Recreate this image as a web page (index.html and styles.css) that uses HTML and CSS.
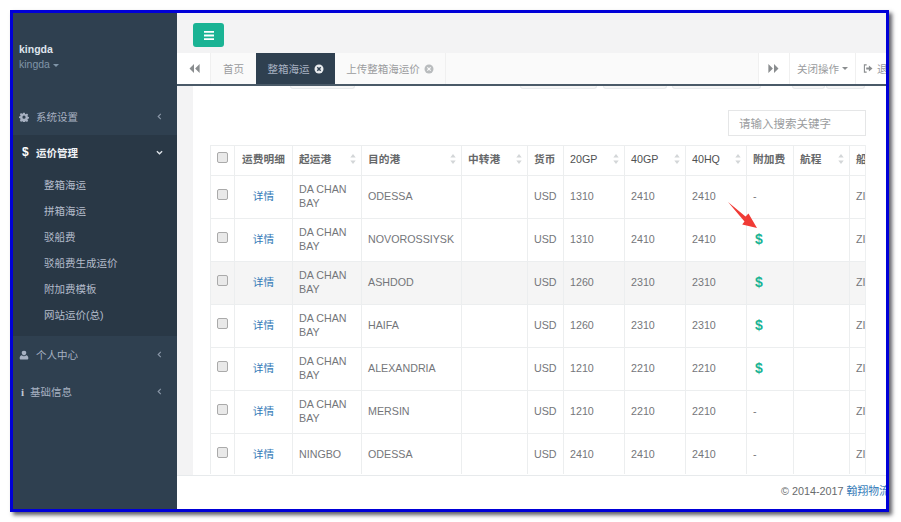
FILE: index.html
```html
<!DOCTYPE html>
<html lang="zh">
<head>
<meta charset="utf-8">
<title>整箱海运</title>
<link rel="stylesheet" href="styles.css">
</head>
<body>
<div class="frame">
  <aside class="sidebar">
    <div class="profile">
      <div class="profile-name">kingda</div>
      <div class="profile-role">kingda <span class="caret"></span></div>
    </div>
    <nav>
      <a class="nav-item">
        <svg class="nav-icon" viewBox="0 0 12 12"><path fill="#a7b1c2" fill-rule="evenodd" d="M5 .8h2l.3 1.5 1 .4 1.3-.8 1.4 1.4-.8 1.3.4 1 1.500.3v2l-1.500.3-.4 1 .8 1.300-1.400 1.400-1.300-.8-1 .4-.3 1.500H5l-.3-1.500-1-.4-1.300.8L1 9.900l.8-1.300-.4-1L-.1 7.300v-2l1.500-.3.4-1L1 2.700 2.400 1.300l1.300.8 1-.4zM6 4.300a1.900 1.900 0 1 0 0 3.800 1.900 1.900 0 0 0 0-3.800z"/></svg>
        <span class="nav-label">系统设置</span>
        <svg class="nav-arrow" viewBox="0 0 6 8"><path d="M4.500 1 1.500 4l3 3" fill="none" stroke="#8a97a8" stroke-width="1.300"/></svg>
      </a>
      <div class="nav-active">
        <a class="nav-item nav-head">
          <span class="nav-dollar">$</span>
          <span class="nav-label">运价管理</span>
          <svg class="nav-arrow" viewBox="0 0 8 6"><path d="M1 1.500 4 4.500l3-3" fill="none" stroke="#dfe4ea" stroke-width="1.500"/></svg>
        </a>
        <ul class="subnav">
          <li>整箱海运</li>
          <li>拼箱海运</li>
          <li>驳船费</li>
          <li>驳船费生成运价</li>
          <li>附加费模板</li>
          <li>网站运价(总)</li>
        </ul>
      </div>
      <a class="nav-item">
        <svg class="nav-icon" viewBox="0 0 12 12"><path fill="#a7b1c2" d="M6 .8a2.700 2.700 0 0 1 2.700 2.900c0 1.300-.9 2.800-2.700 2.800S3.300 5 3.300 3.700A2.700 2.700 0 0 1 6 .8zM3.400 6.200C4.100 7 5 7.400 6 7.400s1.900-.4 2.600-1.200c1.700.2 2.600 1.600 2.600 3.600 0 1-.6 1.500-1.500 1.500H2.300c-.9 0-1.500-.5-1.500-1.500 0-2 .9-3.400 2.600-3.600z"/></svg>
        <span class="nav-label nav-label-tight">个人中心</span>
        <svg class="nav-arrow" viewBox="0 0 6 8"><path d="M4.500 1 1.500 4l3 3" fill="none" stroke="#8a97a8" stroke-width="1.300"/></svg>
      </a>
      <a class="nav-item">
        <span class="nav-info">i</span>
        <span class="nav-label">基础信息</span>
        <svg class="nav-arrow" viewBox="0 0 6 8"><path d="M4.500 1 1.500 4l3 3" fill="none" stroke="#8a97a8" stroke-width="1.300"/></svg>
      </a>
    </nav>
  </aside>

  <section class="content">
    <header class="topbar">
      <button class="menu-btn" type="button" aria-label="菜单">
        <svg viewBox="0 0 10 9" width="10" height="9"><path fill="#fff" d="M0 0h10v1.800H0zM0 3.600h10v1.800H0zM0 7.200h10V9H0z"/></svg>
      </button>
    </header>

    <div class="tabbar">
      <div class="tab-ctrl tab-ctrl-left">
        <svg viewBox="0 0 10 8" width="12" height="9"><path fill="#8a8d8f" d="M5 0v8L1 4zM10 0v8L6 4z"/></svg>
      </div>
      <div class="tab">首页</div>
      <div class="tab tab-on">整箱海运
        <svg class="tab-close" viewBox="0 0 10 10"><circle cx="5" cy="5" r="4.500" fill="#e8ebee"/><path d="M3.300 3.300l3.400 3.400M6.700 3.300 3.300 6.700" stroke="#2f4050" stroke-width="1.400"/></svg>
      </div>
      <div class="tab tab-wide">上传整箱海运价
        <svg class="tab-close" viewBox="0 0 10 10"><circle cx="5" cy="5" r="4.500" fill="#b9bcbe"/><path d="M3.300 3.300l3.400 3.400M6.700 3.300 3.300 6.700" stroke="#fafafa" stroke-width="1.200"/></svg>
      </div>
      <div class="tab-fill"></div>
      <div class="tab-ctrl tab-ctrl-right">
        <svg viewBox="0 0 10 8" width="12" height="9"><path fill="#8a8d8f" d="M0 0v8l4-4zM5 0v8l4-4z"/></svg>
      </div>
      <div class="tab-ctrl tab-close-all">关闭操作 <span class="caret caret-dark"></span></div>
      <div class="tab-ctrl tab-exit">
        <svg class="exit-icon" viewBox="0 0 11 10" width="10" height="9"><path fill="none" stroke="#8a8d8f" stroke-width="1.200" d="M4 1H1.500v8H4"/><path fill="#8a8d8f" d="M3.500 3.800h3V1.800L10.500 5l-4 3.200v-2h-3z"/></svg>
        <span>退出</span>
      </div>
    </div>

    <main class="main">
      <div class="panel">
        <div class="peek">
          <span class="peek-a"></span><span class="peek-b"></span><span class="peek-c"></span><span class="peek-d"></span><span class="peek-e"></span><span class="peek-f"></span>
        </div>
        <div class="search-row">
          <input class="search" type="text" placeholder="请输入搜索关键字">
        </div>
        <div class="table-wrap">
          <table class="grid">
            <colgroup>
              <col class="c1"><col class="c2"><col class="c3"><col class="c4"><col class="c5"><col class="c6"><col class="c7"><col class="c8"><col class="c9"><col class="c10"><col class="c11"><col class="c12">
            </colgroup>
            <thead>
              <tr>
                <th><span class="check check-head"></span></th>
                <th class="th-center">运费明细</th>
                <th><div class="th-sort">起运港<svg class="sort" viewBox="0 0 6 10"><path fill="#d3d6d8" d="M3 0l2.700 3.600H.3zM3 10 .3 6.400h5.400z"/></svg></div></th>
                <th><div class="th-sort">目的港<svg class="sort" viewBox="0 0 6 10"><path fill="#d3d6d8" d="M3 0l2.700 3.600H.3zM3 10 .3 6.400h5.400z"/></svg></div></th>
                <th><div class="th-sort">中转港<svg class="sort" viewBox="0 0 6 10"><path fill="#d3d6d8" d="M3 0l2.700 3.600H.3zM3 10 .3 6.400h5.400z"/></svg></div></th>
                <th>货币</th>
                <th class="th-latin"><div class="th-sort">20GP<svg class="sort" viewBox="0 0 6 10"><path fill="#d3d6d8" d="M3 0l2.700 3.600H.3zM3 10 .3 6.400h5.400z"/></svg></div></th>
                <th class="th-latin"><div class="th-sort">40GP<svg class="sort" viewBox="0 0 6 10"><path fill="#d3d6d8" d="M3 0l2.700 3.600H.3zM3 10 .3 6.400h5.400z"/></svg></div></th>
                <th class="th-latin"><div class="th-sort">40HQ<svg class="sort" viewBox="0 0 6 10"><path fill="#d3d6d8" d="M3 0l2.700 3.600H.3zM3 10 .3 6.400h5.400z"/></svg></div></th>
                <th>附加费</th>
                <th><div class="th-sort">航程<svg class="sort" viewBox="0 0 6 10"><path fill="#d3d6d8" d="M3 0l2.700 3.600H.3zM3 10 .3 6.400h5.400z"/></svg></div></th>
                <th>船公司</th>
              </tr>
            </thead>
            <tbody>
              <tr><td><span class="check"></span></td><td class="link">详情</td><td>DA CHAN BAY</td><td>ODESSA</td><td></td><td>USD</td><td>1310</td><td>2410</td><td>2410</td><td>-</td><td></td><td>ZIM</td></tr>
              <tr><td><span class="check"></span></td><td class="link">详情</td><td>DA CHAN BAY</td><td>NOVOROSSIYSK</td><td></td><td>USD</td><td>1310</td><td>2410</td><td>2410</td><td><span class="fee">$</span></td><td></td><td>ZIM</td></tr>
              <tr class="stripe"><td><span class="check"></span></td><td class="link">详情</td><td>DA CHAN BAY</td><td>ASHDOD</td><td></td><td>USD</td><td>1260</td><td>2310</td><td>2310</td><td><span class="fee">$</span></td><td></td><td>ZIM</td></tr>
              <tr><td><span class="check"></span></td><td class="link">详情</td><td>DA CHAN BAY</td><td>HAIFA</td><td></td><td>USD</td><td>1260</td><td>2310</td><td>2310</td><td><span class="fee">$</span></td><td></td><td>ZIM</td></tr>
              <tr><td><span class="check"></span></td><td class="link">详情</td><td>DA CHAN BAY</td><td>ALEXANDRIA</td><td></td><td>USD</td><td>1210</td><td>2210</td><td>2210</td><td><span class="fee">$</span></td><td></td><td>ZIM</td></tr>
              <tr><td><span class="check"></span></td><td class="link">详情</td><td>DA CHAN BAY</td><td>MERSIN</td><td></td><td>USD</td><td>1210</td><td>2210</td><td>2210</td><td>-</td><td></td><td>ZIM</td></tr>
              <tr><td><span class="check"></span></td><td class="link">详情</td><td>NINGBO</td><td>ODESSA</td><td></td><td>USD</td><td>2410</td><td>2410</td><td>2410</td><td>-</td><td></td><td>ZIM</td></tr>
            </tbody>
          </table>
        </div>
      </div>
    </main>

    <footer class="footer">© 2014-2017 <a class="footer-link">翰翔物流</a></footer>
  </section>

  <svg class="annotation" viewBox="0 0 32 30" width="32" height="30"><path fill="#f03b36" d="M1 1 18.500 15.500 21.500 12.500 30 27 15.200 23.500 17.500 20.500z"/></svg>
</div>
</body>
</html>
```
FILE: styles.css
```css
* { box-sizing: border-box; }

html, body {
  margin: 0;
  height: 100%;
  background: #fff;
  overflow: hidden;
}

body {
  font-family: "Liberation Sans", "Noto Sans CJK SC", sans-serif;
  font-size: 10.700px;
  color: #676a6c;
}

.frame {
  position: relative;
  display: flex;
  width: 879px;
  height: 502px;
  margin: 10px 0 0 10px;
  border: 3px solid #0000d8;
  box-shadow: 3px 3px 4px rgba(40, 40, 50, .75);
  overflow: visible;
}

/* sidebar */
.sidebar {
  flex: 0 0 164px;
  background: #2f4050;
  color: #a7b1c2;
}

.profile {
  height: 85px;
  padding: 29px 0 0 6px;
}

.profile-name {
  color: #dfe4ed;
  font-weight: 700;
  font-size: 10.500px;
  line-height: 14px;
}

.profile-role {
  color: #8095a8;
  font-size: 10.500px;
  line-height: 16px;
}

.caret {
  display: inline-block;
  width: 0;
  height: 0;
  border-top: 3px solid #8095a8;
  border-left: 3px solid transparent;
  border-right: 3px solid transparent;
  vertical-align: middle;
}

.caret-dark { border-top-color: #8a8d8f; }

.nav-item {
  display: flex;
  align-items: center;
  height: 37px;
  padding: 0 14px 0 6px;
  font-size: 10.500px;
  font-weight: 400;
}

.nav-icon {
  width: 10px;
  height: 10px;
  margin-right: 8px;
  flex: none;
}

.nav-label { flex: 1; margin-left: -1px; }
.nav-label-tight { margin-left: -1px; }

.nav-arrow {
  width: 7px;
  height: 7px;
  flex: none;
}

.nav-active { background: #293846; height: 201px; }

.nav-head {
  height: 37px;
  padding-bottom: 3px;
  color: #f0f3f6;
  font-weight: 700;
}

.nav-dollar {
  width: 18px;
  padding-left: 3px;
  font-size: 12px;
  font-weight: 700;
  color: #fff;
}

.nav-info {
  width: 12px;
  padding-left: 2px;
  font-family: "Liberation Serif", serif;
  font-size: 11px;
  font-weight: 700;
  color: #c3cad4;
}

.subnav {
  list-style: none;
  margin: 0;
  padding: 0 0 0 31px;
}

.subnav li {
  height: 26px;
  line-height: 26px;
  font-size: 10.500px;
  color: #b4bccb;
}

/* content column */
.content {
  flex: 1;
  min-width: 0;
  display: flex;
  flex-direction: column;
  overflow: hidden;
  background: #fff;
}

.topbar {
  height: 40px;
  padding: 10px 0 0 16px;
  background: #f3f3f4;
}

.menu-btn {
  display: flex;
  align-items: center;
  justify-content: center;
  width: 31px;
  height: 24px;
  padding: 0;
  border: 0;
  border-radius: 3px;
  background: #1ab394;
}

.tabbar {
  flex: none;
  display: flex;
  height: 33px;
  background: #fafafa;
  border-bottom: 2px solid #4a5a68;
  color: #9a9c9e;
  font-size: 10.500px;
}

.tab-ctrl {
  display: flex;
  align-items: center;
  justify-content: center;
  background: #fff;
  flex: none;
}

.tab-ctrl-left { width: 33px; }
.tab-ctrl-right { width: 31px; border-left: 1px solid #f0f0f0; }
.tab-close-all { width: 66px; gap: 3px; border-left: 1px solid #f0f0f0; }

.tab-exit {
  width: 31px;
  justify-content: flex-start;
  gap: 4px;
  padding-left: 7px;
  border-left: 1px solid #f0f0f0;
  white-space: nowrap;
  overflow: hidden;
}

.exit-icon { flex: none; }

.tab {
  display: flex;
  align-items: center;
  justify-content: center;
  gap: 4px;
  width: 46px;
  border-left: 1px solid #f0f0f0;
  flex: none;
}

.tab-on {
  width: 79px;
  background: #2f4050;
  border-left: 0;
  color: #a7b1c2;
}

.tab-wide {
  width: 111px;
  border-left: 0;
  border-right: 1px solid #f0f0f0;
}

.tab-fill { flex: 1; }

.tab-close {
  width: 10px;
  height: 10px;
  flex: none;
}

/* main */
.main {
  flex: 1;
  min-height: 0;
  padding-left: 16px;
  background: #f3f3f4;
  overflow: hidden;
}

.panel {
  height: 100%;
  padding: 0 20px 0 17px;
  background: #fff;
  overflow: hidden;
}

.peek {
  display: flex;
  height: 3px;
  margin-left: 80px;
}

.peek span {
  display: block;
  height: 3px;
  border: 1px solid #e7eaec;
  border-top: 0;
  border-radius: 0 0 3px 3px;
  background: #f7f7f7;
}

.peek-a { width: 65px; }
.peek-b { width: 77px; margin-left: 165px; }
.peek-c { width: 64px; margin-left: 6px; }
.peek-d { width: 89px; margin-left: 5px; }
.peek-e { width: 33px; margin-left: 31px; }
.peek-f { width: 39px; margin-left: 1px; }

.search-row {
  display: flex;
  justify-content: flex-end;
  padding-top: 21px;
  height: 56px;
}

.search {
  width: 138px;
  height: 26px;
  padding: 0 10px;
  border: 1px solid #e5e6e7;
  font-family: "Noto Sans CJK SC", sans-serif;
  font-size: 11.500px;
  color: #676a6c;
  outline: 0;
}

.search::placeholder { color: #9a9c9e; opacity: 1; }

.table-wrap {
  height: 329px;
  overflow: hidden;
  border-right: 1px solid #eef0f1;
}

.grid {
  width: 698px;
  border-collapse: collapse;
  table-layout: fixed;
}

.c1 { width: 24px; }
.c2 { width: 58px; }
.c3 { width: 69px; }
.c4 { width: 100px; }
.c5 { width: 66px; }
.c6 { width: 36px; }
.c7, .c8, .c9 { width: 61px; }
.c10 { width: 47px; }
.c11 { width: 56px; }
.c12 { width: 60px; }

.grid th, .grid td {
  border: 1px solid #eceeef;
  padding: 0 5px 2px 6px;
  line-height: 14.300px;
  text-align: left;
  overflow: hidden;
}

.grid th {
  height: 30px;
  font-weight: 700;
  color: #66686a;
  white-space: nowrap;
}

.grid th.th-center { text-align: center; padding-left: 0; padding-right: 0; }
.grid th.th-latin { font-weight: 400; color: #4f5153; }

.grid td {
  height: 43px;
  color: #74767a;
}

.th-sort {
  display: flex;
  align-items: center;
  justify-content: space-between;
}

.sort {
  width: 6px;
  height: 10px;
  flex: none;
}

.stripe td { background: #f5f5f5; }

.grid td.link {
  padding-left: 0;
  padding-right: 0;
  color: #337ab7;
  text-align: center;
}

.check {
  display: block;
  width: 11px;
  height: 11px;
  margin: -3px 0 0 0;
  border: 1px solid #aaa;
  border-radius: 2px;
  background: #e9e9e9;
}

.check-head { margin-top: -4px; }

.fee {
  display: block;
  padding-left: 2px;
  color: #1ab394;
  font-size: 14px;
  font-weight: 700;
}

.footer {
  flex: none;
  height: 34px;
  padding: 8px 0 0 604px;
  border-top: 1px solid #e7eaec;
  background: #fff;
  white-space: nowrap;
  overflow: hidden;
  font-size: 10.800px;
  line-height: 14px;
  color: #676a6c;
}

.footer-link { color: #337ab7; }

/* hand-drawn marker over the table */
.annotation {
  position: absolute;
  left: 714px;
  top: 188px;
}
```
